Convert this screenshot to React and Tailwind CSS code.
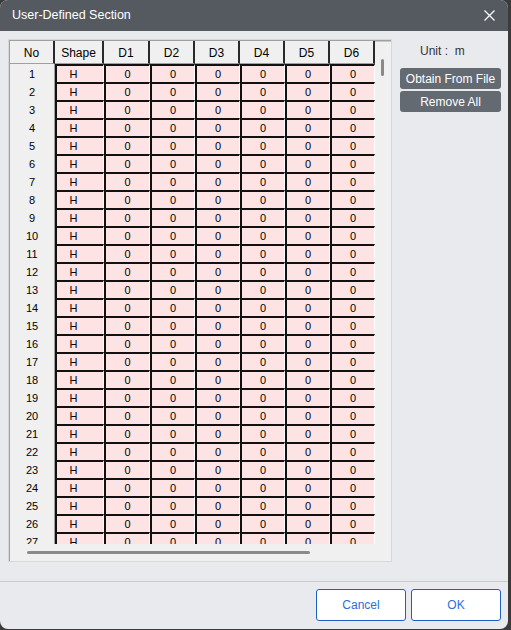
import React from "react";

const COLS = ["No", "Shape", "D1", "D2", "D3", "D4", "D5", "D6"];
const GRID = "grid grid-cols-[45px_49px_46px_45px_45px_45px_45px_45px]";
const rows = Array.from({ length: 27 }, (_, i) => i + 1);

function Row({ n }) {
  const vals = ["H", "0", "0", "0", "0", "0", "0"];
  return (
    <div className={`${GRID} h-[18px] shrink-0`}>
      <div className="flex items-center justify-center pt-[1px] bg-[#f0f0f0] border-r border-b border-[#a0a0a0] text-[11px] text-black">
        {n}
      </div>
      {vals.map((v, i) => (
        <div
          key={i}
          className={`flex items-center justify-center bg-[#fde3e3] border-l-2 border-t-2 border-[#111] border-r border-r-white border-b border-b-[#fff] text-[11px] text-black ${i === 0 ? "pr-[13px]" : ""}`}
        >
          {v}
        </div>
      ))}
    </div>
  );
}

export default function App() {
  return (
    <div className="w-[511px] h-[630px] bg-[#3b3b3b] overflow-hidden" style={{ fontFamily: '"Liberation Sans", Arial, sans-serif' }}>
      <div className="w-[508px] h-[629px] bg-[#e9eaee] rounded-[8px] overflow-hidden flex flex-col">
        {/* Title bar */}
        <div className="h-[31px] shrink-0 bg-[#555a61] flex items-center justify-between pl-[12px] pr-[12px]">
          <span className="text-white text-[12.5px]">User-Defined Section</span>
          <svg width="11" height="11" viewBox="0 0 11 11" className="mr-[1px]">
            <path d="M0.5 0.5 L10.5 10.5 M10.5 0.5 L0.5 10.5" stroke="white" strokeWidth="1.2" />
          </svg>
        </div>

        {/* Body */}
        <div className="flex pt-[8px] pl-[8px] gap-[8px]">
          {/* Grid panel */}
          <div className="w-[384px] h-[523px] border border-[#d8d8d8] bg-[#f0f0f0]">
            <div className="w-full h-full border-l border-t border-[#a0a0a0] flex flex-col">
              <div className="flex h-[503px] overflow-hidden">
                <div className="w-[365px] flex flex-col overflow-hidden">
                  <div className={`${GRID} h-[23px] shrink-0`}>
                    {COLS.map((c) => (
                      <div
                        key={c}
                        className="flex items-center justify-center pt-[1px] bg-[#f0f0f0] border-r-2 border-r-[#2a2a2a] border-b border-b-[#a0a0a0] text-[12px] text-black"
                      >
                        {c}
                      </div>
                    ))}
                  </div>
                  {rows.map((n) => (
                    <Row key={n} n={n} />
                  ))}
                </div>
                {/* vertical scrollbar */}
                <div className="w-[16px] bg-[#f0f0f0] border-t border-[#c8c8c8] flex justify-center pt-[17px]">
                  <div className="w-[3px] h-[17px] bg-[#8a8a8a] rounded-full ml-[-1px]" />
                </div>
              </div>
              {/* horizontal scrollbar */}
              <div className="h-[16px] bg-[#f0f0f0] flex items-center pl-[17px]">
                <div className="w-[283px] h-[3px] bg-[#8a8a8a] rounded-full" />
              </div>
            </div>
          </div>

          {/* Right panel */}
          <div className="w-[101px] flex flex-col">
            <div className="text-[12px] text-[#333] pl-[20px] pt-[3px] h-[29px]">Unit :&nbsp; m</div>
            <button className="h-[21px] bg-[#646a72] rounded-[3px] text-white text-[12px] leading-none">
              Obtain From File
            </button>
            <button className="h-[21px] mt-[2px] bg-[#646a72] rounded-[3px] text-white text-[12px] leading-none">
              Remove All
            </button>
          </div>
        </div>

        {/* Footer */}
        <div className="mt-[19px] border-t border-[#c9cbd0]" />
        <div className="flex justify-end gap-[5px] pr-[7px] pt-[7px]">
          <button className="w-[90px] h-[32px] bg-white border border-[#1f5fc4] rounded-[3px] text-[#2a6fd6] text-[12px]">
            Cancel
          </button>
          <button className="w-[90px] h-[32px] bg-white border border-[#1f5fc4] rounded-[3px] text-[#2a6fd6] text-[12px]">
            OK
          </button>
        </div>
      </div>
    </div>
  );
}
